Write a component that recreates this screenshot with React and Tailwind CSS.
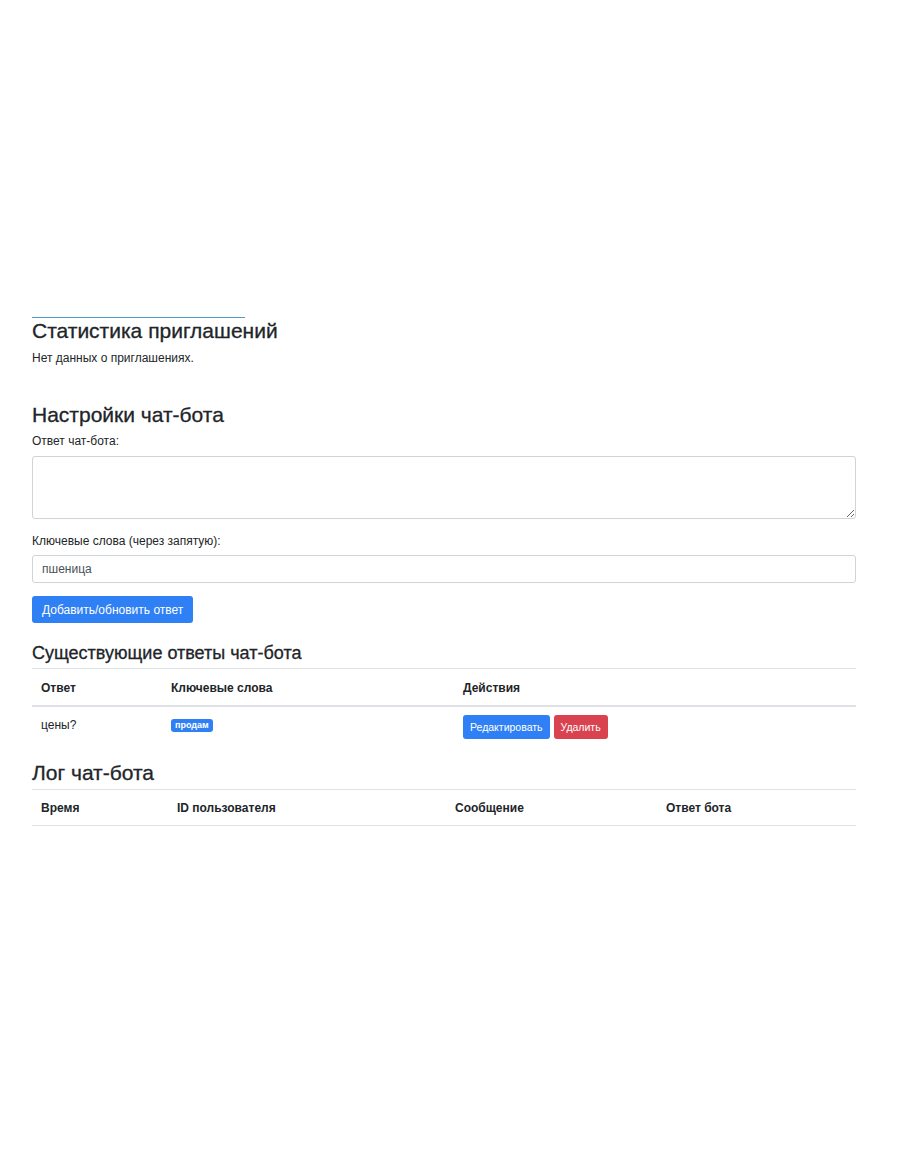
export default function App() {
  const font = { fontFamily: '"Liberation Sans", Arial, sans-serif' };
  return (
    <div className="min-h-[1155px] w-[910px] bg-white text-[#212529] text-[12px] leading-[18px]" style={font}>
      <div className="ml-[32px] w-[824px] pt-[317px]">
        <div className="h-px w-[213px] bg-[#4f9cc9]" />
        <h3 className="text-[21px] leading-[25px] font-medium [-webkit-text-stroke:0.3px_#212529] mb-[6px]">Статистика приглашений</h3>
        <p className="mb-[12px]">Нет данных о приглашениях.</p>

        <h3 className="mt-[35px] text-[21px] leading-[25px] font-medium [-webkit-text-stroke:0.3px_#212529] mb-[5px]">Настройки чат-бота</h3>
        <div className="mb-[13px]">
          <label className="block mb-[6px]">Ответ чат-бота:</label>
          <textarea className="block w-full h-[63px] border border-[#ced4da] rounded-[3px] px-[9px] py-[5px] outline-none" />
        </div>
        <div className="mb-[13px]">
          <label className="block mb-[5px]">Ключевые слова (через запятую):</label>
          <input
            className="block w-full h-[28px] border border-[#ced4da] rounded-[3px] px-[9px] text-[#495057] outline-none"
            defaultValue="пшеница"
            style={font}
          />
        </div>
        <button className="h-[27px] px-[10px] rounded-[3px] bg-[#2f7ff5] text-white text-[12px]" style={font}>
          Добавить/обновить ответ
        </button>

        <h4 className="mt-[19px] text-[18px] leading-[22px] font-medium [-webkit-text-stroke:0.3px_#212529] mb-[4px]">Существующие ответы чат-бота</h4>
        <table className="w-full border-collapse mb-[13px]">
          <thead>
            <tr className="border-t border-[#dee2e6]">
              <th className="w-[130px] text-left font-bold px-[9px] pt-[10px] pb-[8px] border-b-2 border-[#dee2e6]">Ответ</th>
              <th className="w-[292px] text-left font-bold px-[9px] pt-[10px] pb-[8px] border-b-2 border-[#dee2e6]">Ключевые слова</th>
              <th className="text-left font-bold px-[9px] pt-[10px] pb-[8px] border-b-2 border-[#dee2e6]">Действия</th>
            </tr>
          </thead>
          <tbody>
            <tr>
              <td className="px-[9px] py-[9px] align-top">цены?</td>
              <td className="px-[9px] py-[9px] align-top">
                <span className="inline-block mt-[3px] h-[13px] px-[4px] rounded-[3px] bg-[#2f7ff5] text-white text-[9px] leading-[13px] font-bold align-top">
                  продам
                </span>
              </td>
              <td className="px-[9px] py-[8px] align-top">
                <div className="flex gap-[4px]">
                  <button className="h-[24px] px-[7px] rounded-[3px] bg-[#2f7ff5] text-white text-[10.5px]" style={font}>
                    Редактировать
                  </button>
                  <button className="h-[24px] px-[7px] rounded-[3px] bg-[#d9434f] text-white text-[10.5px]" style={font}>
                    Удалить
                  </button>
                </div>
              </td>
            </tr>
          </tbody>
        </table>

        <h3 className="text-[21px] leading-[25px] font-medium [-webkit-text-stroke:0.3px_#212529] mb-[4px]">Лог чат-бота</h3>
        <table className="w-full border-collapse">
          <thead>
            <tr className="border-t border-[#dee2e6]">
              <th className="w-[136px] text-left font-bold px-[9px] pt-[9px] pb-[8px] border-b border-[#dee2e6]">Время</th>
              <th className="w-[278px] text-left font-bold px-[9px] pt-[9px] pb-[8px] border-b border-[#dee2e6]">ID пользователя</th>
              <th className="w-[211px] text-left font-bold px-[9px] pt-[9px] pb-[8px] border-b border-[#dee2e6]">Сообщение</th>
              <th className="text-left font-bold px-[9px] pt-[9px] pb-[8px] border-b border-[#dee2e6]">Ответ бота</th>
            </tr>
          </thead>
          <tbody />
        </table>
      </div>
    </div>
  );
}
